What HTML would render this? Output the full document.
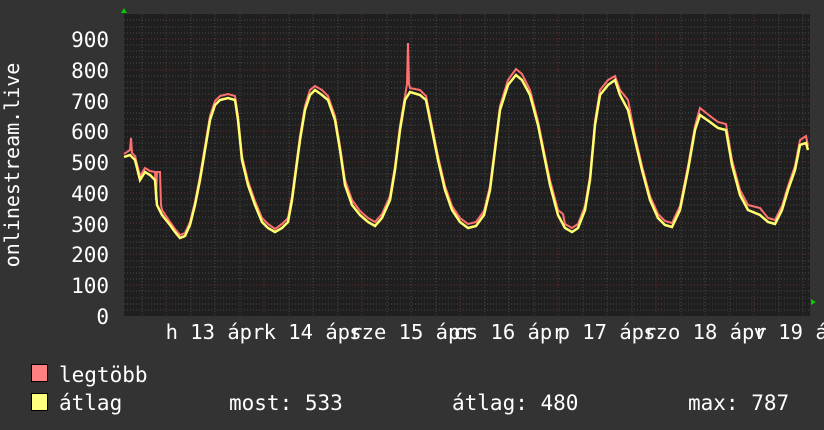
<!DOCTYPE html>
<html><head><meta charset="utf-8"><style>
body{margin:0;width:824px;height:430px;background:#333;overflow:hidden}
svg{display:block}
text{font-family:"DejaVu Sans Mono","Liberation Mono",monospace;fill:#fff}
</style></head><body>
<svg width="824" height="430" xmlns="http://www.w3.org/2000/svg">
<rect width="824" height="430" fill="#333"/>
<rect x="124" y="14" width="686" height="302" fill="#1f1f1f"/>
<g stroke="#4a4a4a" stroke-width="1" stroke-dasharray="1,2">
<path d="M124 310H810M124 304H810M124 298H810M124 291H810M124 279H810M124 273H810M124 267H810M124 261H810M124 248H810M124 242H810M124 236H810M124 230H810M124 217H810M124 211H810M124 205H810M124 199H810M124 187H810M124 180H810M124 174H810M124 168H810M124 156H810M124 150H810M124 143H810M124 137H810M124 125H810M124 119H810M124 113H810M124 106H810M124 94H810M124 88H810M124 82H810M124 76H810M124 63H810M124 57H810M124 51H810M124 45H810M124 33H810M124 27H810M124 20H810"/>
<path d="M142 14V316M191 14V316M215 14V316M240 14V316M289 14V316M313 14V316M338 14V316M387 14V316M411 14V316M436 14V316M485 14V316M509 14V316M534 14V316M583 14V316M607 14V316M632 14V316M681 14V316M705 14V316M730 14V316M779 14V316M803 14V316"/>
</g>
<g stroke="#6a2c2c" stroke-width="1" stroke-dasharray="1,2">
<path d="M124 285H810M124 254H810M124 223H810M124 193H810M124 162H810M124 131H810M124 100H810M124 70H810M124 39H810"/>
<path d="M166 14V316M264 14V316M362 14V316M460 14V316M558 14V316M656 14V316M754 14V316"/>
</g>
<path d="M124 8l-3 5h6z" fill="#0c0"/>
<path d="M816 302l-5-3v6z" fill="#0c0"/>
<polyline fill="none" stroke="#ff7070" stroke-width="2" points="124,154 130,150 131,138 132,153 135,156 140,176 145,168 150,171 155,172 156,200 157,172 160,172 161,205 162,210 170,222 175,229 180,235 185,233 190,222 195,202 200,176 205,146 210,116 215,101 220,96 228,94 235,96 238,116 242,156 248,181 255,201 262,218 268,224 275,229 282,224 288,218 292,196 296,166 300,136 305,106 310,90 315,86 322,90 328,96 335,116 340,146 345,180 352,200 360,211 368,218 375,222 382,214 390,196 395,166 400,126 405,96 407,84 408,43 409,84 410,88 420,90 426,96 432,126 438,156 445,186 452,206 460,218 468,224 476,222 484,211 490,186 495,146 500,106 508,80 516,69 522,74 530,90 538,121 545,156 550,180 558,210 563,214 565,224 572,228 578,224 585,206 590,176 595,121 600,90 608,80 615,76 620,90 628,100 635,136 642,166 650,196 658,214 665,221 672,223 680,206 688,166 695,126 700,108 710,116 718,122 726,124 732,160 740,190 748,205 760,208 768,218 775,220 782,206 788,186 795,166 800,140 806,136 808,146"/>
<polyline fill="none" stroke="#ffff70" stroke-width="2.5" points="124,157 130,155 135,160 140,180 145,172 150,175 155,180 157,205 162,215 170,225 175,232 180,238 185,236 190,225 195,205 200,180 205,150 210,120 215,105 220,100 228,98 235,100 238,120 242,160 248,185 255,205 262,222 268,228 275,232 282,228 288,222 292,200 296,170 300,140 305,110 310,95 315,90 322,95 328,100 335,120 340,150 345,185 352,205 360,215 368,222 375,226 382,218 390,200 395,170 400,130 405,100 410,92 420,95 426,100 432,130 438,160 445,190 452,210 460,222 468,228 476,226 484,215 490,190 495,150 500,110 508,85 516,75 522,80 530,95 538,125 545,160 550,185 558,215 565,228 572,232 578,228 585,210 590,180 595,125 600,95 608,85 615,80 620,95 628,110 635,140 642,170 650,200 658,218 665,225 672,227 680,210 688,170 695,130 700,115 710,122 718,128 726,130 732,165 740,195 748,210 760,215 768,222 775,224 782,210 788,190 795,170 800,145 806,143 808,150"/>
<g font-size="21" text-anchor="end">
<text x="109" y="47">900</text><text x="109" y="78">800</text><text x="109" y="109">700</text><text x="109" y="139">600</text><text x="109" y="170">500</text><text x="109" y="201">400</text><text x="109" y="232">300</text><text x="109" y="262">200</text><text x="109" y="293">100</text><text x="109" y="324">0</text>
</g>
<text font-size="20" transform="translate(19,165) rotate(-90)" text-anchor="middle">onlinestream.live</text>
<g font-size="20.5" text-anchor="middle">
<text x="215" y="339">h 13 ápr</text><text x="313" y="339">k 14 ápr</text><text x="411" y="339">sze 15 ápr</text><text x="509" y="339">cs 16 ápr</text><text x="607" y="339">p 17 ápr</text><text x="705" y="339">szo 18 ápr</text><text x="803" y="339">v 19 ápr</text>
</g>
<rect x="31.5" y="364.5" width="16" height="17" fill="#ff8080" stroke="#000"/>
<rect x="31.5" y="393.5" width="16" height="17" fill="#ffff80" stroke="#000"/>
<g font-size="21">
<text x="59" y="382">legtöbb</text>
<text x="59" y="410">átlag</text>
<text x="229" y="410">most: 533</text>
<text x="452" y="410">átlag: 480</text>
<text x="688" y="410">max: 787</text>
</g>
</svg>
</body></html>
